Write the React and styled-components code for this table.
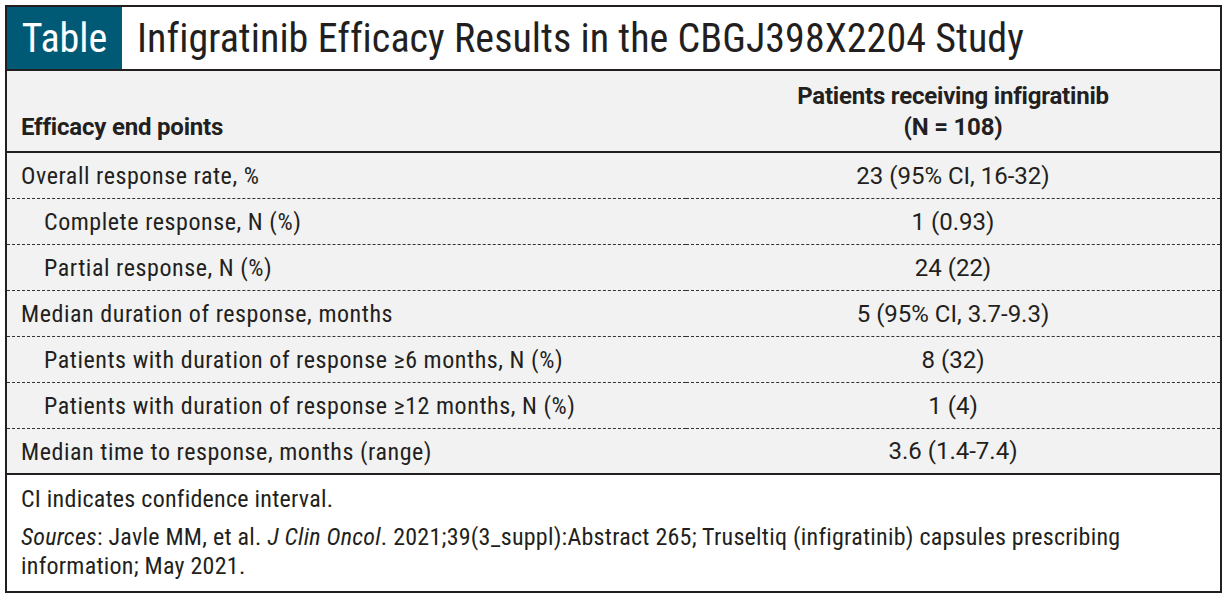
import React from "react";
import { styled, createGlobalStyle } from "styled-components";

const GlobalStyle = createGlobalStyle`
  html, body {
    margin: 0;
    padding: 0;
    background: #fff;
  }
  body {
    font-family: Roboto, "DejaVu Sans Condensed", "Liberation Sans", sans-serif;
    font-stretch: 75%;
    color: #231f20;
  }
`;

const Page = styled.div`
  padding: 5px 7px 6px 5px;
`;

const Frame = styled.div`
  width: 1213px;
  border: 2px solid #231f20;
`;

const TitleBar = styled.div`
  display: flex;
  align-items: stretch;
  height: 62px;
  border-bottom: 2px solid #231f20;
`;

const Tag = styled.div`
  width: 115px;
  background: #005a76;
  color: #fff;
  font-size: 40px;
  display: flex;
  align-items: center;
  justify-content: center;
`;

const Title = styled.h1`
  margin: 0;
  padding-left: 15px;
  font-size: 40px;
  font-weight: 400;
  letter-spacing: 0.05px;
  display: flex;
  align-items: center;
`;

const Table = styled.table`
  width: 100%;
  border-collapse: collapse;
  background: #f2f2f2;
  font-size: 24px;
`;

const HeadCell = styled.th`
  height: 72px;
  padding: 0 14px 8px;
  font-weight: 700;
  font-stretch: 97%;
  letter-spacing: -0.2px;
  vertical-align: bottom;
  text-align: ${(p) => (p.$center ? "center" : "left")};
  line-height: 31px;
  border-bottom: 2px solid #231f20;
  width: ${(p) => (p.$center ? "506px" : "auto")};
`;

const Row = styled.tr`
  height: 46px;
  border-bottom: ${(p) => (p.$last ? "2px solid #231f20" : "1px dashed #333")};
`;

const Label = styled.td`
  padding: 2px 0 0 ${(p) => (p.$sub ? "37px" : "14px")};
  vertical-align: middle;
  letter-spacing: 0.55px;
`;

const Value = styled.td`
  padding-top: 2px;
  text-align: center;
  vertical-align: middle;
  font-stretch: 88%;
`;

const Notes = styled.div`
  background: #fff;
  padding: 10px 14px 10px;
  font-size: 24px;
  letter-spacing: 0.25px;
  line-height: 29px;

  p {
    margin: 0;
  }

  p + p {
    margin-top: 9px;
  }
`;

const rows = [
  { label: "Overall response rate, %", value: "23 (95% CI, 16-32)" },
  { label: "Complete response, N (%)", value: "1 (0.93)", sub: true },
  { label: "Partial response, N (%)", value: "24 (22)", sub: true },
  { label: "Median duration of response, months", value: "5 (95% CI, 3.7-9.3)" },
  { label: "Patients with duration of response \u22656 months, N (%)", value: "8 (32)", sub: true },
  { label: "Patients with duration of response \u226512 months, N (%)", value: "1 (4)", sub: true },
  { label: "Median time to response, months (range)", value: "3.6 (1.4-7.4)" },
];

const App = () => {
  return (
    <Page>
      <GlobalStyle />
      <Frame>
        <TitleBar>
          <Tag>Table</Tag>
          <Title>Infigratinib Efficacy Results in the CBGJ398X2204 Study</Title>
        </TitleBar>
        <Table>
          <thead>
            <tr>
              <HeadCell>Efficacy end points</HeadCell>
              <HeadCell $center>
                Patients receiving infigratinib
                <br />
                (N = 108)
              </HeadCell>
            </tr>
          </thead>
          <tbody>
            {rows.map((r, i) => (
              <Row key={i} $last={i === rows.length - 1}>
                <Label $sub={r.sub}>{r.label}</Label>
                <Value>{r.value}</Value>
              </Row>
            ))}
          </tbody>
        </Table>
        <Notes>
          <p>CI indicates confidence interval.</p>
          <p>
            <em>Sources</em>: Javle MM, et al. <em>J Clin Oncol</em>. 2021;39(3_suppl):Abstract 265; Truseltiq
            (infigratinib) capsules prescribing information; May 2021.
          </p>
        </Notes>
      </Frame>
    </Page>
  );
};

export default App;
